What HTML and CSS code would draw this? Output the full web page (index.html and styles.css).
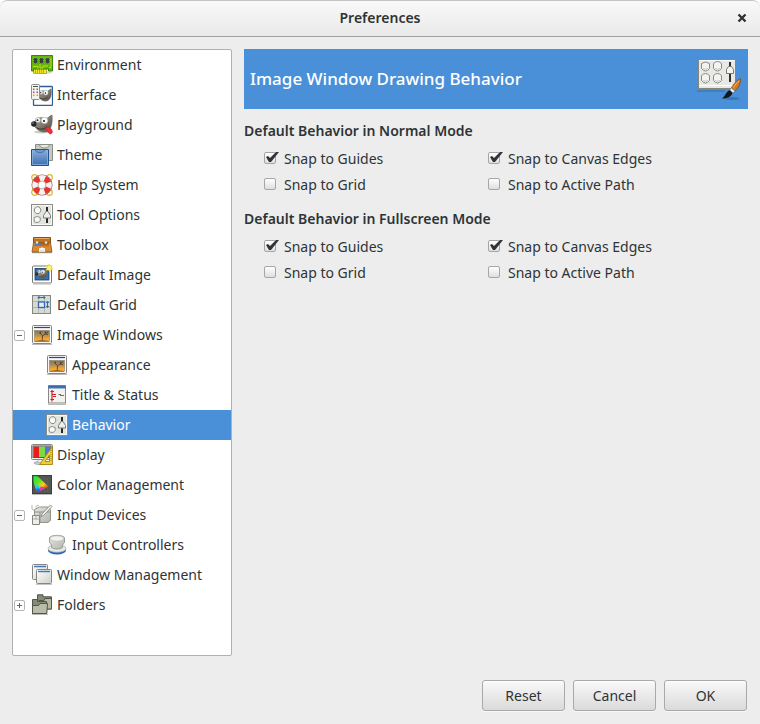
FILE: index.html
```html
<!DOCTYPE html>
<html lang="en">
<head>
  <meta charset="UTF-8">
  <meta name="viewport" content="width=device-width, initial-scale=1.0">
  <title>Preferences</title>
  <link rel="stylesheet" href="styles.css">
</head>
<body>
  <svg class="defs" width="0" height="0" aria-hidden="true">
    <defs>
      <linearGradient id="paper" x1="0" y1="0" x2="1" y2="1">
        <stop offset="0" stop-color="#fff"/><stop offset="1" stop-color="#cfd0cb"/>
      </linearGradient>
      <linearGradient id="metal" x1="0" y1="0" x2="1" y2="1">
        <stop offset="0" stop-color="#e4e5e0"/><stop offset="1" stop-color="#b3b5ae"/>
      </linearGradient>
      <linearGradient id="blue" x1="0" y1="0" x2="0" y2="1">
        <stop offset="0" stop-color="#8fb3dc"/><stop offset="1" stop-color="#3a6cb0"/>
      </linearGradient>
      <linearGradient id="sunset" x1="0" y1="0" x2="0" y2="1">
        <stop offset="0" stop-color="#77746c"/><stop offset=".45" stop-color="#b78e55"/><stop offset=".75" stop-color="#f7a52c"/><stop offset="1" stop-color="#ffb638"/>
      </linearGradient>
      <linearGradient id="fur" x1="0" y1="0" x2="1" y2="1">
        <stop offset="0" stop-color="#b5afa3"/><stop offset="1" stop-color="#4d483f"/>
      </linearGradient>
      <symbol id="wilber" viewBox="0 0 22 22">
        <path d="M21 1C18 2 17 5 14 4.500C10 3 7 3.500 5 6L2 9.500C4 14 8 18 13 18C19 18 22 12 21 1z" fill="url(#fur)" stroke="#6d675c" stroke-width=".7"/>
        <ellipse cx="7" cy="6" rx="2.500" ry="2.600" fill="#f2f2f0" stroke="#999" stroke-width=".5"/>
        <circle cx="13.500" cy="6.500" r="3.300" fill="#fff" stroke="#999" stroke-width=".5"/>
        <circle cx="6.500" cy="6.200" r=".9" fill="#222"/><circle cx="13" cy="7" r="1.100" fill="#222"/>
        <ellipse cx="2.800" cy="10" rx="2.700" ry="2.800" fill="#22292b"/>
        <circle cx="2" cy="9" r=".7" fill="#a7b0b4"/>
        <path d="M5.500 13.500C9 16 13 15.500 16 12.500" fill="none" stroke="#26231f" stroke-width=".8"/>
      </symbol>
      <symbol id="environment" viewBox="0 0 22 22">
        <ellipse cx="14" cy="18.500" rx="7" ry="1.500" fill="#bbb" opacity=".6"/>
        <path d="M2.500 14h13v5.500h-13z" fill="#f2e632" stroke="#a19a12" stroke-width=".7"/>
        <path d="M4.500 15v4M6.500 15v4M8.500 15v4M10.500 15v4M12.500 15v4" stroke="#a09518" stroke-width=".7"/>
        <path d="M.5 1.500h21v15.500h-4V15h-15v2h-2z" fill="#62b90b" stroke="#3c8706"/>
        <path d="M2 12.500h5v2M9 10v4h3v-2h5M18 13.500h2V4" fill="none" stroke="#c6d71e"/>
        <g fill="#36413e" stroke="#a7b5a0" stroke-width=".6" stroke-dasharray="1 1">
          <rect x="2.500" y="4" width="4" height="5.500"/><rect x="8.500" y="4" width="4" height="5.500"/><rect x="14.500" y="4" width="4" height="5.500"/>
        </g>
      </symbol>
      <symbol id="interface" viewBox="0 0 22 22">
        <rect x="2.500" y="2.500" width="19" height="19" rx="1" fill="#fff" stroke="#2c5f9e" stroke-width="1.300"/>
        <use href="#wilber" x="5" y="4" width="16" height="16"/>
        <rect x=".5" y=".5" width="8" height="15" rx="1" fill="#f2f2ef" stroke="#8c8e88"/>
        <path d="M2 2.500h5" stroke="#555"/>
        <path d="M2 4.500h1.500v1.500H2z" fill="#4a9b36"/><path d="M5.500 4.500H7v1.500H5.500zM2 7.500h1.500v1.500H2z" fill="#d64444"/>
        <path d="M5.500 7.500H7v1.500H5.500z" fill="#4770b5"/><path d="M2 10.500h1.500v1.500H2zM5.500 10.500H7v1.500H5.500z" fill="#ef942f"/>
      </symbol>
      <symbol id="playground" viewBox="0 0 22 22">
        <ellipse cx="11" cy="18" rx="8" ry="1.500" fill="#ccc"/>
        <use href="#wilber" width="22" height="22"/>
        <path d="M14.500 13.500c2-1.500 3.500 0 5 1c2 1.500 2.500 4 1 5c-2 1.500-3.500-1.500-4.500-2.500z" fill="#ef3038" stroke="#c51824" stroke-width=".6"/>
      </symbol>
      <symbol id="theme" viewBox="0 0 22 22">
        <path d="M4.500 .5h17v16h-17z" fill="#c5c8c0" stroke="#8b8d86"/>
        <path d="M8.500 1c1 4 9 4 10 0" fill="#e5e7e2" stroke="#8b8d86"/>
        <path d="M.5 5.500h17v16H.500z" fill="url(#blue)" stroke="#264f8c"/>
        <path d="M1.500 6.500h15v14h-15z" fill="none" stroke="#94b6df" stroke-width=".7"/>
        <path d="M4 6c1 3.500 9 3.500 10 0" fill="#7299cd" stroke="#3963a0" stroke-width=".8"/>
      </symbol>
      <symbol id="help" viewBox="0 0 22 22">
        <g fill="none" stroke="#d8b92b" stroke-width="1.200">
          <circle cx="3.500" cy="3.500" r="2.800"/><circle cx="18.500" cy="3.500" r="2.800"/><circle cx="3.500" cy="18.500" r="2.800"/><circle cx="18.500" cy="18.500" r="2.800"/>
        </g>
        <circle cx="11" cy="11" r="7" fill="none" stroke="#9d4d48" stroke-width="7"/>
        <circle cx="11" cy="11" r="7" fill="none" stroke="#f3f2ef" stroke-width="5.800"/>
        <circle cx="11" cy="11" r="7" fill="none" stroke="#e6342f" stroke-width="5.800" stroke-dasharray="5.500 5.500" stroke-dashoffset="-2.700"/>
        <circle cx="11" cy="11" r="3.900" fill="#fff" stroke="#998d86" stroke-width=".6"/>
      </symbol>
      <symbol id="options" viewBox="0 0 22 22">
        <rect x=".5" y=".5" width="21" height="21" fill="#e3e4df" stroke="#8a8c86"/>
        <rect x="1.500" y="1.500" width="19" height="19" fill="none" stroke="#f7f7f5"/>
        <g fill="#f9f9f8" stroke="#7f827b" stroke-width=".9">
          <path d="M3.500 5l2-2.200h2.500l1.700 2.200v2.200L8 9.500H5.300L3.500 7.500z"/>
          <path d="M3.200 13.500q3-2 6 0v3L7.500 18.300H4.200L3.200 17z"/>
        </g>
        <path d="M16 3v16" stroke="#222b2c" stroke-width="2"/>
        <path d="M12.500 14V11.500L15 7.500h2L19.500 11.500V14z" fill="#eeeeec" stroke="#7b7e77"/>
      </symbol>
      <symbol id="toolbox" viewBox="0 0 22 22">
        <path d="M1 18.500h20" stroke="#aaa" stroke-width="1.500"/>
        <path d="M2.500 3.500h17v6h-17z" fill="#bd7420" stroke="#8c5213"/>
        <path d="M3.500 4.500h15" stroke="#e8a658"/>
        <path d="M2.500 8.500h17l1.500 9.500H1z" fill="#d88b2c" stroke="#8c5213" stroke-width=".8"/>
        <path d="M4 9h14v2.500H4z" fill="#9d682f"/>
        <path d="M3.500 11h7" fill="none" stroke="#4d80c5" stroke-width="1.800"/>
        <path d="M11 11.500h7" stroke="#e35d1b" stroke-width="1.500"/>
        <circle cx="6" cy="8.500" r="1.200" fill="#dfe5ef"/><circle cx="15" cy="8.500" r="1.200" fill="#dfe5ef"/>
        <path d="M8.500 18v-3.500h5V18M10 14h2v2h-2z" fill="#ddd" stroke="#fff" stroke-width=".8"/>
      </symbol>
      <symbol id="image" viewBox="0 0 22 22">
        <rect x="1.500" y="2" width="19" height="17" rx="1" fill="#fff" stroke="#777a75"/>
        <rect x="4" y="4.500" width="14" height="11.500" fill="#2d71b7" stroke="#183c68" stroke-width=".8"/>
        <use href="#wilber" x="4" y="4" width="13" height="13"/>
        <path d="M2 20h18" stroke="#bbb"/>
        <path d="M18 0l1 2 2-.5-.7 2L22 5l-2.300.7L19 8l-1.500-2L15 6l1-2-1.500-2 2.500.4z" fill="#fff37a" stroke="#edd33b" stroke-width=".6"/>
      </symbol>
      <symbol id="grid" viewBox="0 0 22 22">
        <rect x="1.500" y="1.500" width="18" height="18" fill="#d7dad0" stroke="#858880"/>
        <path d="M7.500 2v17M13.500 2v17M2 7.500h17M2 13.500h17" stroke="#b3b8ac"/>
        <rect x="7.500" y="8" width="6" height="5.500" fill="#e7ebf3" stroke="#3469ae" stroke-width="1.300"/>
        <path d="M7 3.500h7M8.500 2L7 3.500 8.500 5M12.500 2L14 3.500 12.500 5M16.500 7.500v6M15 9l1.500-1.500L18 9M15 12l1.500 1.500L18 12" fill="none" stroke="#3469ae"/>
      </symbol>
      <symbol id="window" viewBox="0 0 22 22">
        <path d="M1 20.500h20" stroke="#bbb"/>
        <rect x="1.500" y="1.500" width="19" height="18" rx="1" fill="#f7f7f5" stroke="#838680"/>
        <path d="M3 3.500h16" stroke="#244c8c" stroke-width="1.200"/>
        <rect x="3.500" y="6.500" width="15" height="11" fill="url(#sunset)" stroke="#86754f" stroke-width=".5"/>
        <path d="M4 17l5-.8h4l5 .8v.5H4z" fill="#8c5a20"/>
        <path d="M11.200 16.500l.3-5L8 8.500M11.500 12l3-2.500 2.500-1.500M9.500 9.500V7.500M14.500 9.500V7.500M14 10l3 .5" fill="none" stroke="#443828" stroke-width=".8"/>
      </symbol>
      <symbol id="title" viewBox="0 0 22 22">
        <path d="M2 20.500h18" stroke="#bbb"/>
        <rect x="2.500" y="2" width="17" height="17" fill="#f1f1ee" stroke="#868984"/>
        <path d="M2 1.500h18v3H2z" fill="#4575b8"/>
        <path d="M3 2h16" stroke="#244c8c" stroke-width=".6"/>
        <path d="M6 6v4M4.500 7.500H8M6 10v5M6 10.500h4M7 12.500h3M4.500 15.500H8M6 14v3.500" stroke="#d51b24" stroke-width="1.200"/>
        <path d="M12.500 10.500h2.500M14 11.500h4" stroke="#6d706c"/>
      </symbol>
      <symbol id="display" viewBox="0 0 22 22">
        <ellipse cx="9" cy="19" rx="6" ry="1.500" fill="#d5d5d2" stroke="#8b8d88" stroke-width=".7"/>
        <path d="M7.500 15h5v3.500H6.500z" fill="#eee" stroke="#999" stroke-width=".6"/>
        <rect x=".5" y=".5" width="21" height="15" rx="1" fill="#f5f5f3" stroke="#858782"/>
        <path d="M2.500 2.500H8v10.500H2.500z" fill="#ef1919"/><path d="M8 2.500h6v10.500H8z" fill="#7adb42"/><path d="M14 2.500h5.500v10.500H14z" fill="#5177d2"/>
        <rect x="2" y="2" width="18" height="11.500" fill="none" stroke="#555"/>
        <path d="M21.500 2.500v18H8.500zM18.500 11v6.500h-4.500z" fill="#edcd3a" fill-rule="evenodd" stroke="#a98415" stroke-width=".9"/>
        <path d="M20 6v12" stroke="#9c7c18" stroke-width=".8" stroke-dasharray="1 1"/>
      </symbol>
      <linearGradient id="gamutA" x1="0" y1="0" x2="1" y2="1">
        <stop offset="0" stop-color="#0fe64a"/><stop offset=".35" stop-color="#62e51c"/><stop offset=".6" stop-color="#f5d416"/><stop offset=".85" stop-color="#f12222"/>
      </linearGradient>
      <linearGradient id="gamutB" x1="0" y1="0" x2="0" y2="1">
        <stop offset=".3" stop-color="#15d8ff" stop-opacity="0"/><stop offset=".65" stop-color="#18c4ff"/><stop offset="1" stop-color="#2222e8"/>
      </linearGradient>
      <symbol id="color" viewBox="0 0 22 22">
        <path d="M1 20.500h20" stroke="#bbb"/>
        <rect x="1.500" y="1.500" width="19" height="18" fill="#535653" stroke="#3c3f3c"/>
        <path d="M4 5h15M4 8h15M4 11h15M4 14h15M4 17h15" stroke="#747774" stroke-width=".7" stroke-dasharray="1 2"/>
        <path d="M2.500 2.500C5 1 8 3 11 6.500L17.500 12.500 6.500 18C4.500 15 2 8 2.500 2.500z" fill="url(#gamutA)"/>
        <path d="M2.500 5L8 11.500 9.500 16.500 6.500 18C4.500 15 2.500 9 2.500 5z" fill="url(#gamutB)"/>
        <path d="M9.500 12.500l5 1-6 3.500z" fill="#e22fd0"/>
      </symbol>
      <symbol id="devices" viewBox="0 0 22 22">
        <path d="M1 1v4l3 2M8 2C5 0 4 3 6 5" fill="none" stroke="#b5b7b1"/>
        <path d="M3.500 5.500l5-2.500h9l2 2.500v11l-2.500 2H5.500l-2-2z" fill="url(#metal)" stroke="#92948e"/>
        <path d="M4 8h15M9 8v10" stroke="#8f918b"/>
        <path d="M1.500 11.500h7v9h-7z" fill="#ededea" stroke="#858780"/>
        <path d="M2 15h6.500M5 11.500V15" stroke="#aaa"/>
        <path d="M19.500 1L11 10l-1 2.500 2.500-1L21 2.500z" fill="#f6f6f4" stroke="#7c7e79" stroke-width=".8"/>
      </symbol>
      <symbol id="controllers" viewBox="0 0 22 22">
        <ellipse cx="11" cy="16.500" rx="9" ry="4" fill="#2e68b2"/>
        <ellipse cx="11" cy="14.500" rx="9" ry="3.800" fill="#e8e8e6" stroke="#a9aba7" stroke-width=".7"/>
        <path d="M3.500 4C3.500.500 18.500.500 18.500 4v4.500C18 10 16.500 10 16.500 11.500v2C14 15.500 8 15.500 5.500 13.500v-2C5.500 10 4 10 3.500 8.500z" fill="url(#metal)" stroke="#8b8d88" stroke-width=".8"/>
        <ellipse cx="11" cy="4.500" rx="6.500" ry="2.600" fill="#f3f3f2" stroke="#c3c4c0" stroke-width=".6"/>
      </symbol>
      <symbol id="windows" viewBox="0 0 22 22">
        <rect x="1.500" y=".5" width="15" height="15" rx="1" fill="url(#paper)" stroke="#858780"/>
        <path d="M3 2.500h12" stroke="#4778bd" stroke-width="1.500"/>
        <rect x="5.500" y="5.500" width="15" height="14" rx="1" fill="url(#paper)" stroke="#858780"/>
        <path d="M7 7.500h12" stroke="#4778bd" stroke-width="1.500"/>
        <path d="M5 20.500h16" stroke="#c5c5c5"/>
      </symbol>
      <symbol id="folders" viewBox="0 0 22 22">
        <path d="M1 20.500h16" stroke="#bbb"/>
        <path d="M6.500 15V.800h5.500v2h8.500V15z" fill="#858a77" stroke="#51554a"/>
        <path d="M8 15V6.500h5l1-2h6.500V15z" fill="#b4b9a3" stroke="#51554a"/>
        <path d="M1.500 19.500V5.500h5v2h9v12z" fill="#858a77" stroke="#51554a"/>
        <path d="M1.500 19.500v-8h6l1.500-2h7.500l-.7 10z" fill="#b8bca8" stroke="#51554a"/>
      </symbol>
      <symbol id="behavior" viewBox="0 3 48 48">
        <path d="M3 39h28" stroke="#234b7a" stroke-width="2" opacity=".25"/>
        <rect x="4.500" y="7.500" width="37" height="29" fill="#e8e9e5" stroke="#85877f"/>
        <path d="M5.500 33.500h35M5.500 8.500h35" stroke="#fff"/>
        <g fill="#f3f3f1" stroke="#888b84">
          <path d="M7.500 11.500q4-3 8 0v5q-4 5-8 0z"/><path d="M19.500 11.500q4-4 8 0v5q-4 5-8 0z"/>
          <path d="M7.500 23.500q4-4 8 0v5q-4 5-8 0z"/><path d="M19.500 23.500q4-4 8 0v5q-4 5-8 0z"/>
        </g>
        <path d="M9 16.500q2.500 1.500 5 0M21 16.500q2.500 1.500 5 0M9 28.500q2.500 1.500 5 0M21 28.500q2.500 1.500 5 0" fill="none" stroke="#c6c8c2"/>
        <path d="M36 10v20" stroke="#293132" stroke-width="2"/>
        <path d="M32.500 21.500v-4l2-3h3l2 3v4z" fill="#f4f4f2" stroke="#777a73"/>
        <ellipse cx="38" cy="46.500" rx="8" ry="1.500" fill="#28598f" opacity=".5"/>
        <path d="M46.500 26.500c-3 1-7.500 6-9 9.500l3.500 3c3.500-3 6-8.500 5.500-12.500z" fill="#d67b24" stroke="#864710" stroke-width=".8"/>
        <path d="M45 29c-2 1.500-4 4-5.500 6.500" fill="none" stroke="#f4b66f"/>
        <path d="M37.500 36l3.500 3-2 2-3.500-3z" fill="#eee" stroke="#777" stroke-width=".7"/>
        <path d="M35.500 38l3 3c-1 3-4 5.500-10.500 5.500 3-1.500 3.500-6.500 7.500-8.500z" fill="#111718"/>
      </symbol>
    </defs>
  </svg>

  <header class="titlebar">
    <h1>Preferences</h1>
    <button class="close" type="button" aria-label="Close">
      <svg width="10" height="10" viewBox="0 0 10 10"><path d="M1.500 1.500l7 7M8.500 1.500l-7 7" stroke="#2e3436" stroke-width="2.400"/></svg>
    </button>
  </header>

  <main>
    <nav class="sidebar">
      <ul class="tree">
        <li><svg class="icon"><use href="#environment"/></svg>Environment</li>
        <li><svg class="icon"><use href="#interface"/></svg>Interface</li>
        <li><svg class="icon"><use href="#playground"/></svg>Playground</li>
        <li><svg class="icon"><use href="#theme"/></svg>Theme</li>
        <li><svg class="icon"><use href="#help"/></svg>Help System</li>
        <li><svg class="icon"><use href="#options"/></svg>Tool Options</li>
        <li><svg class="icon"><use href="#toolbox"/></svg>Toolbox</li>
        <li><svg class="icon"><use href="#image"/></svg>Default Image</li>
        <li><svg class="icon"><use href="#grid"/></svg>Default Grid</li>
        <li class="parent"><button class="expander" type="button" aria-label="Collapse Image Windows" aria-expanded="true"></button><svg class="icon"><use href="#window"/></svg>Image Windows</li>
        <li class="child"><svg class="icon"><use href="#window"/></svg>Appearance</li>
        <li class="child"><svg class="icon"><use href="#title"/></svg>Title &amp; Status</li>
        <li class="child selected"><svg class="icon"><use href="#options"/></svg>Behavior</li>
        <li><svg class="icon"><use href="#display"/></svg>Display</li>
        <li><svg class="icon"><use href="#color"/></svg>Color Management</li>
        <li class="parent"><button class="expander" type="button" aria-label="Collapse Input Devices" aria-expanded="true"></button><svg class="icon"><use href="#devices"/></svg>Input Devices</li>
        <li class="child"><svg class="icon"><use href="#controllers"/></svg>Input Controllers</li>
        <li><svg class="icon"><use href="#windows"/></svg>Window Management</li>
        <li class="parent"><button class="expander" type="button" aria-label="Expand Folders" aria-expanded="false"></button><svg class="icon"><use href="#folders"/></svg>Folders</li>
      </ul>
    </nav>

    <div class="page">
      <div class="banner">
        <h2>Image Window Drawing Behavior</h2>
        <svg class="banner-icon"><use href="#behavior"/></svg>
      </div>

      <section>
        <h3>Default Behavior in Normal Mode</h3>
        <div class="checks">
          <label><input type="checkbox" checked>Snap to Guides</label>
          <label><input type="checkbox" checked>Snap to Canvas Edges</label>
          <label><input type="checkbox">Snap to Grid</label>
          <label><input type="checkbox">Snap to Active Path</label>
        </div>
      </section>

      <section>
        <h3>Default Behavior in Fullscreen Mode</h3>
        <div class="checks">
          <label><input type="checkbox" checked>Snap to Guides</label>
          <label><input type="checkbox" checked>Snap to Canvas Edges</label>
          <label><input type="checkbox">Snap to Grid</label>
          <label><input type="checkbox">Snap to Active Path</label>
        </div>
      </section>
    </div>
  </main>

  <footer>
    <button type="button">Reset</button>
    <button type="button">Cancel</button>
    <button type="button">OK</button>
  </footer>
</body>
</html>
```
FILE: styles.css
```css
* {
  box-sizing: border-box;
}
html {
  background: #fff;
}
body {
  margin: 0;
  min-height: 100vh;
  display: flex;
  flex-direction: column;
  background: #ededed;
  border-radius: 7px 7px 0 0;
  color: #2e3436;
  font-family: "Noto Sans", "Open Sans", sans-serif;
  font-size: 14px;
  line-height: 20px;
}
h1, h2, h3 {
  margin: 0;
}
button {
  color: inherit;
  font: inherit;
}
.defs {
  position: absolute;
}

/* title bar */
.titlebar {
  display: grid;
  grid-template-columns: 36px 1fr 36px;
  align-items: center;
  height: 37px;
  padding-bottom: 2px;
  border: 1px solid #c4c4c4;
  border-bottom-color: #a1a1a1;
  border-width: 1px 0;
  border-radius: 7px 7px 0 0;
  background: linear-gradient(#f9f9f9, #e9e9e9);
}
.titlebar h1 {
  grid-column: 2;
  text-align: center;
  font-size: 14px;
  font-weight: 600;
}
.close {
  display: flex;
  justify-content: center;
  padding: 6px;
  border: none;
  background: none;
}

main {
  flex: 1;
  display: flex;
  gap: 12px;
  padding: 12px 12px 0;
}

/* category tree */
.sidebar {
  width: 220px;
  border: 1px solid #b0b0b0;
  border-radius: 2px;
  background: #fff;
}
.tree {
  margin: 0;
  padding: 0;
  list-style: none;
}
.tree li {
  display: flex;
  align-items: center;
  gap: 4px;
  height: 30px;
  padding-left: 18px;
}
.tree .parent {
  padding-left: 1px;
}
.tree .child {
  padding-left: 33px;
}
.tree .selected {
  background: #4a90d9;
  color: #fff;
}
.icon {
  width: 22px;
  height: 22px;
}
.expander {
  width: 11px;
  height: 11px;
  margin-right: 2px;
  padding: 0;
  border: 1px solid #b5b5b5;
  border-radius: 2px;
  background: linear-gradient(#666, #666) center / 5px 1px no-repeat #fff;
}
.expander[aria-expanded="false"] {
  background:
    linear-gradient(#666, #666) center / 5px 1px no-repeat,
    linear-gradient(#666, #666) center / 1px 5px no-repeat #fff;
}

/* right hand page */
.page {
  flex: 1;
}
.banner {
  display: flex;
  align-items: center;
  justify-content: space-between;
  height: 60px;
  margin-bottom: 12px;
  padding: 0 6px;
  background: #4a90d9;
  color: #fff;
}
.banner h2 {
  font-size: 17px;
  font-weight: 500;
}
.banner-icon {
  width: 48px;
  height: 48px;
}
section {
  margin-bottom: 13px;
}
h3 {
  margin-bottom: 7px;
  font-size: 14px;
  font-weight: 600;
}
.checks {
  display: grid;
  grid-template-columns: 224px 1fr;
  row-gap: 4px;
  padding-left: 20px;
}
.checks label {
  display: flex;
  align-items: center;
  gap: 8px;
  height: 22px;
}
input[type="checkbox"] {
  appearance: none;
  position: relative;
  width: 12px;
  height: 12px;
  margin: 0 0 2px;
  border: 1px solid #a6a6a6;
  border-radius: 2px;
  background: linear-gradient(#fff, #dedede);
}
input[type="checkbox"]:checked::after {
  content: "";
  position: absolute;
  top: -1px;
  left: 0;
  width: 14px;
  height: 11px;
  background: #2e3436;
  clip-path: polygon(1px 5px, 3px 4px, 5px 6px, 11px 0, 14px 0, 6px 10px, 4px 10px);
}

/* buttons */
footer {
  display: flex;
  justify-content: flex-end;
  gap: 8px;
  padding: 24px 13px 13px 12px;
}
footer button {
  min-width: 83px;
  height: 31px;
  padding: 0 12px;
  border: 1px solid #a9a9a9;
  border-radius: 3px;
  background: linear-gradient(#f9f9f9, #dadada);
  box-shadow: 0 1px #f8f8f8, inset 0 1px #fff;
}
```
